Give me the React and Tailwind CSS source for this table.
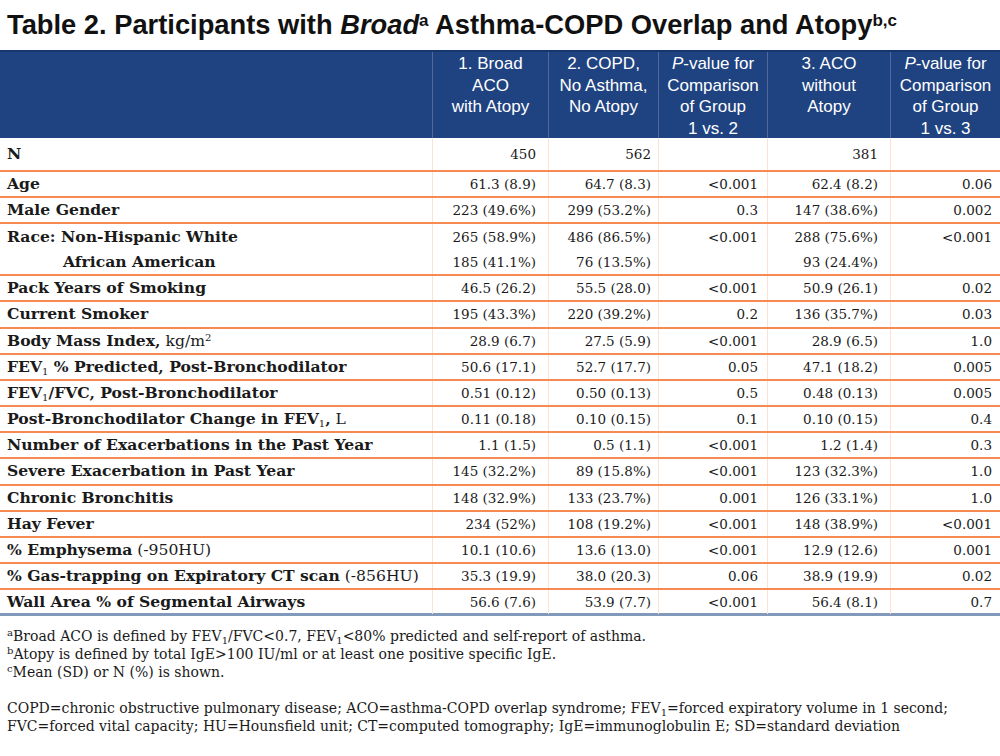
import React from "react";

const serif = "font-['DejaVu_Serif',serif]";
const sans = "font-['Liberation_Sans',Arial,sans-serif]";

const Sub1 = () => (
  <sub className="text-[10px] font-normal">1</sub>
);

const rows = [
  { label: <b>N</b>, vals: ["450", "562", "", "381", ""], h: "h-[34px]" },
  { label: <b>Age</b>, vals: ["61.3 (8.9)", "64.7 (8.3)", "<0.001", "62.4 (8.2)", "0.06"] },
  { label: <b>Male Gender</b>, vals: ["223 (49.6%)", "299 (53.2%)", "0.3", "147 (38.6%)", "0.002"] },
  { label: <b>Race: Non-Hispanic White</b>, vals: ["265 (58.9%)", "486 (86.5%)", "<0.001", "288 (75.6%)", "<0.001"], noBorder: true },
  { label: <b className="pl-[56px]">African American</b>, vals: ["185 (41.1%)", "76 (13.5%)", "", "93 (24.4%)", ""] },
  { label: <b>Pack Years of Smoking</b>, vals: ["46.5 (26.2)", "55.5 (28.0)", "<0.001", "50.9 (26.1)", "0.02"] },
  { label: <b>Current Smoker</b>, vals: ["195 (43.3%)", "220 (39.2%)", "0.2", "136 (35.7%)", "0.03"], h: "h-[27px]" },
  {
    label: (
      <>
        <b>Body Mass Index,</b> kg/m<sup className="text-[10px]">2</sup>
      </>
    ),
    vals: ["28.9 (6.7)", "27.5 (5.9)", "<0.001", "28.9 (6.5)", "1.0"],
  },
  {
    label: (
      <b>
        FEV<Sub1 /> % Predicted, Post-Bronchodilator
      </b>
    ),
    vals: ["50.6 (17.1)", "52.7 (17.7)", "0.05", "47.1 (18.2)", "0.005"],
  },
  {
    label: (
      <b>
        FEV<Sub1 />/FVC, Post-Bronchodilator
      </b>
    ),
    vals: ["0.51 (0.12)", "0.50 (0.13)", "0.5", "0.48 (0.13)", "0.005"],
  },
  {
    label: (
      <>
        <b>
          Post-Bronchodilator Change in FEV<Sub1 />,
        </b>{" "}
        L
      </>
    ),
    vals: ["0.11 (0.18)", "0.10 (0.15)", "0.1", "0.10 (0.15)", "0.4"],
  },
  { label: <b>Number of Exacerbations in the Past Year</b>, vals: ["1.1 (1.5)", "0.5 (1.1)", "<0.001", "1.2 (1.4)", "0.3"] },
  { label: <b>Severe Exacerbation in Past Year</b>, vals: ["145 (32.2%)", "89 (15.8%)", "<0.001", "123 (32.3%)", "1.0"], h: "h-[27px]" },
  { label: <b>Chronic Bronchitis</b>, vals: ["148 (32.9%)", "133 (23.7%)", "0.001", "126 (33.1%)", "1.0"] },
  { label: <b>Hay Fever</b>, vals: ["234 (52%)", "108 (19.2%)", "<0.001", "148 (38.9%)", "<0.001"] },
  {
    label: (
      <>
        <b>% Emphysema</b> (-950HU)
      </>
    ),
    vals: ["10.1 (10.6)", "13.6 (13.0)", "<0.001", "12.9 (12.6)", "0.001"],
  },
  {
    label: (
      <>
        <b>% Gas-trapping on Expiratory CT scan</b> (-856HU)
      </>
    ),
    vals: ["35.3 (19.9)", "38.0 (20.3)", "0.06", "38.9 (19.9)", "0.02"],
  },
  { label: <b>Wall Area % of Segmental Airways</b>, vals: ["56.6 (7.6)", "53.9 (7.7)", "<0.001", "56.4 (8.1)", "0.7"], last: true },
];

const padR = ["pr-[12px]", "pr-[7px]", "pr-[9px]", "pr-[12px]", "pr-[8px]"];

const grid = "grid grid-cols-[432px_116px_110px_109px_123px_110px]";

function Header() {
  const heads = [
    ["1. Broad", "ACO", "with Atopy"],
    ["2. COPD,", "No Asthma,", "No Atopy"],
    [<><i>P</i>-value for</>, "Comparison", "of Group", "1 vs. 2"],
    ["3. ACO", "without", "Atopy"],
    [<><i>P</i>-value for</>, "Comparison", "of Group", "1 vs. 3"],
  ];
  return (
    <div className={`${grid} h-[88px] bg-[#1f4381] border-t-2 border-[#17386e] ${sans} text-white text-[17px] leading-[21.5px]`}>
      <div />
      {heads.map((lines, i) => (
        <div key={i} className="border-l border-[#56679a] text-center pt-px">
          {lines.map((l, j) => (
            <div key={j}>{l}</div>
          ))}
        </div>
      ))}
    </div>
  );
}

function Row({ r }) {
  const h = r.h || "h-[26px]";
  const border = r.noBorder
    ? ""
    : r.last
    ? "border-b-[3px] border-[#8199bb]"
    : "border-b-2 border-[#f58a52]";
  return (
    <div className={`${grid} ${h} ${border} ${serif} text-[#1a1a1a] text-[13.5px]`}>
      <div className="pl-[7px] flex items-center whitespace-nowrap text-[15.6px]">
        <span>{r.label}</span>
      </div>
      {r.vals.map((v, i) => (
        <div key={i} className={`border-l border-[#fde2d2] flex items-center justify-end ${padR[i]} whitespace-nowrap`}>
          {v}
        </div>
      ))}
    </div>
  );
}

export default function App() {
  return (
    <div className="w-[1000px] h-[756px] bg-white overflow-hidden">
      <h1 className={`${sans} font-bold text-[27.3px] leading-[50px] h-[50px] pl-[7px] text-[#111] whitespace-nowrap`}>
        Table 2. Participants with <i>Broad</i>
        <sup className="text-[17px]">a</sup> Asthma-COPD Overlap and Atopy
        <sup className="text-[17px]">b,c</sup>
      </h1>
      <Header />
      {rows.map((r, i) => (
        <Row key={i} r={r} />
      ))}
      <div className={`${serif} text-[14px] leading-[18px] text-[#1a1a1a] pl-[7px] mt-[11px]`}>
        <div>
          <sup className="text-[10px]">a</sup>Broad ACO is defined by FEV<sub className="text-[10px]">1</sub>/FVC&lt;0.7, FEV
          <sub className="text-[10px]">1</sub>&lt;80% predicted and self-report of asthma.
        </div>
        <div>
          <sup className="text-[10px]">b</sup>Atopy is defined by total IgE&gt;100 IU/ml or at least one positive specific IgE.
        </div>
        <div>
          <sup className="text-[10px]">c</sup>Mean (SD) or N (%) is shown.
        </div>
        <div className="h-[18px]" />
        <div>
          COPD=chronic obstructive pulmonary disease; ACO=asthma-COPD overlap syndrome; FEV
          <sub className="text-[10px]">1</sub>=forced expiratory volume in 1 second;
        </div>
        <div>
          FVC=forced vital capacity; HU=Hounsfield unit; CT=computed tomography; IgE=immunoglobulin E; SD=standard deviation
        </div>
      </div>
    </div>
  );
}
